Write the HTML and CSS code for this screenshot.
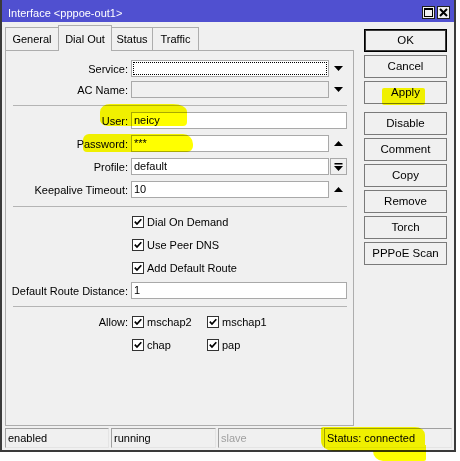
FILE: index.html
```html
<!DOCTYPE html>
<html>
<head>
<meta charset="utf-8">
<link rel="stylesheet" href="styles.css">
</head>
<body>
<div class="window">
  <div class="titlebar">
    <span class="title">Interface &lt;pppoe-out1&gt;</span>
    <div class="tbtns">
      <span class="tbtn"><svg width="9" height="9" viewBox="0 0 9 9"><rect x="0.5" y="0.5" width="8" height="8" fill="none" stroke="#000"/><rect x="0" y="0" width="9" height="2" fill="#000"/></svg></span>
      <span class="tbtn"><svg width="9" height="9" viewBox="0 0 9 9"><path d="M1 1L8 8M8 1L1 8" stroke="#000" stroke-width="2"/></svg></span>
    </div>
  </div>
  <div class="body">
    <div class="main">
      <div class="left">
        <div class="tabs">
          <div class="tab t-general">General</div>
          <div class="tab t-dial active">Dial Out</div>
          <div class="tab t-status">Status</div>
          <div class="tab t-traffic">Traffic</div>
        </div>
        <div class="panel">
          <div class="row first">
            <div class="lbl">Service:</div>
            <div class="field"><div class="input focus"></div><div class="arrow"><svg width="9" height="5" viewBox="0 0 9 5"><path d="M0 0H9L4.5 5Z"/></svg></div></div>
          </div>
          <div class="row tight">
            <div class="lbl">AC Name:</div>
            <div class="field"><div class="input disabled"></div><div class="arrow"><svg width="9" height="5" viewBox="0 0 9 5"><path d="M0 0H9L4.5 5Z"/></svg></div></div>
          </div>
          <div class="sep"></div>
          <div class="row">
            <div class="lbl">User:</div>
            <div class="field"><div class="input">neicy</div></div>
          </div>
          <div class="row">
            <div class="lbl">Password:</div>
            <div class="field"><div class="input">***</div><div class="arrow"><svg width="9" height="5" viewBox="0 0 9 5"><path d="M0 5H9L4.5 0Z"/></svg></div></div>
          </div>
          <div class="row">
            <div class="lbl">Profile:</div>
            <div class="field"><div class="input">default</div><div class="arrow boxed"><svg width="9" height="8" viewBox="0 0 9 8"><rect x="0.5" y="0" width="8" height="1.5"/><path d="M0 3H9L4.5 8Z"/></svg></div></div>
          </div>
          <div class="row">
            <div class="lbl">Keepalive Timeout:</div>
            <div class="field"><div class="input">10</div><div class="arrow"><svg width="9" height="5" viewBox="0 0 9 5"><path d="M0 5H9L4.5 0Z"/></svg></div></div>
          </div>
          <div class="sep sep2"></div>
          <div class="crow">
            <span class="cb"><svg width="10" height="10" viewBox="0 0 10 10"><path d="M1.8 4.6L4 7L8.3 2.2" fill="none" stroke="#000" stroke-width="1.7"/></svg></span>Dial On Demand
          </div>
          <div class="crow">
            <span class="cb"><svg width="10" height="10" viewBox="0 0 10 10"><path d="M1.8 4.6L4 7L8.3 2.2" fill="none" stroke="#000" stroke-width="1.7"/></svg></span>Use Peer DNS
          </div>
          <div class="crow">
            <span class="cb"><svg width="10" height="10" viewBox="0 0 10 10"><path d="M1.8 4.6L4 7L8.3 2.2" fill="none" stroke="#000" stroke-width="1.7"/></svg></span>Add Default Route
          </div>
          <div class="row">
            <div class="lbl">Default Route Distance:</div>
            <div class="field"><div class="input">1</div></div>
          </div>
          <div class="sep"></div>
          <div class="row allow">
            <div class="lbl">Allow:</div>
            <div class="citems">
              <span class="citem"><span class="cb"><svg width="10" height="10" viewBox="0 0 10 10"><path d="M1.8 4.6L4 7L8.3 2.2" fill="none" stroke="#000" stroke-width="1.7"/></svg></span>mschap2</span>
              <span class="citem"><span class="cb"><svg width="10" height="10" viewBox="0 0 10 10"><path d="M1.8 4.6L4 7L8.3 2.2" fill="none" stroke="#000" stroke-width="1.7"/></svg></span>mschap1</span>
            </div>
          </div>
          <div class="row allow">
            <div class="lbl"></div>
            <div class="citems">
              <span class="citem"><span class="cb"><svg width="10" height="10" viewBox="0 0 10 10"><path d="M1.8 4.6L4 7L8.3 2.2" fill="none" stroke="#000" stroke-width="1.7"/></svg></span>chap</span>
              <span class="citem"><span class="cb"><svg width="10" height="10" viewBox="0 0 10 10"><path d="M1.8 4.6L4 7L8.3 2.2" fill="none" stroke="#000" stroke-width="1.7"/></svg></span>pap</span>
            </div>
          </div>
        </div>
      </div>
      <div class="buttons">
        <div class="btn ok">OK</div>
        <div class="btn">Cancel</div>
        <div class="btn apply">Apply</div>
        <div class="btn">Disable</div>
        <div class="btn">Comment</div>
        <div class="btn">Copy</div>
        <div class="btn">Remove</div>
        <div class="btn">Torch</div>
        <div class="btn">PPPoE Scan</div>
      </div>
    </div>
    <div class="status">
      <div class="cell c1">enabled</div>
      <div class="cell c2">running</div>
      <div class="cell c3 dim">slave</div>
      <div class="cell c4">Status: connected</div>
    </div>
  </div>
</div>
<div class="hl hl-user"></div>
<div class="hl hl-pass"></div>
<div class="hl hl-apply"></div>
<div class="hl hl-status"></div>
<div class="hl hl-status2"></div>
</body>
</html>
```

FILE: styles.css
```css
body {
  margin: 0;
  background: #fff;
  font: 11px "Liberation Sans", Arial, sans-serif;
  color: #000;
  position: relative;
  width: 460px;
  height: 461px;
  overflow: hidden;
}

.window {
  width: 456px;
  height: 452px;
  box-sizing: border-box;
  border: 2px solid #3a3a3a;
  border-top: 0;
  background: #f0f0f0;
  display: flex;
  flex-direction: column;
}

.titlebar {
  height: 22px;
  flex: none;
  background: #5050d0;
  color: #fff;
  display: flex;
  justify-content: space-between;
  align-items: flex-start;
  padding: 0 4px 0 6px;
  box-sizing: border-box;
}

.title {
  font-size: 11px;
  line-height: 14px;
  margin-top: 6px;
}

.tbtns {
  display: flex;
  gap: 2px;
  margin-top: 6px;
}

.tbtn {
  width: 13px;
  height: 13px;
  box-sizing: border-box;
  background: #f0f0f0;
  border: 1px solid #202020;
  display: flex;
  align-items: center;
  justify-content: center;
}

.body {
  flex: 1;
  padding: 3px 2px 0 3px;
  display: flex;
  flex-direction: column;
}

.main {
  display: flex;
  height: 401px;
}

.left {
  width: 349px;
  display: flex;
  flex-direction: column;
}

.tabs {
  display: flex;
  align-items: flex-end;
  height: 25px;
  flex: none;
  position: relative;
  z-index: 1;
}

.tab {
  height: 23px;
  box-sizing: border-box;
  border: 1px solid #adadad;
  border-bottom: 0;
  background: #f0f0f0;
  display: flex;
  align-items: center;
  justify-content: center;
  margin-right: -1px;
}

.tab.active {
  height: 26px;
  margin-bottom: -1px;
  background: #f0f0f0;
  position: relative;
  z-index: 2;
}

.t-general { width: 54px; }
.t-dial { width: 54px; }
.t-status { width: 42px; }
.t-traffic { width: 47px; }

.panel {
  height: 376px;
  box-sizing: border-box;
  border: 1px solid #adadad;
  padding: 9px 6px 0 0;
}

.row {
  display: flex;
  align-items: center;
  height: 17px;
  margin-top: 6px;
}

.row.first { margin-top: 0; }
.row.tight { margin-top: 4px; }

.lbl {
  width: 122px;
  margin-right: 3px;
  text-align: right;
  white-space: nowrap;
}

.field {
  width: 216px;
  height: 17px;
  display: flex;
  gap: 1px;
}

.input {
  flex: 1;
  height: 17px;
  box-sizing: border-box;
  border: 1px solid #a9a9a9;
  background: #fff;
  padding-left: 2px;
  line-height: 15px;
}

.input.focus {
  outline: 1px dotted #000;
  outline-offset: -3px;
}

.input.disabled {
  background: #f0f0f0;
}

.arrow {
  width: 17px;
  height: 17px;
  display: flex;
  align-items: center;
  justify-content: center;
  box-sizing: border-box;
}

.arrow.boxed {
  border: 1px solid #a9a9a9;
  background: #f0f0f0;
}

.sep {
  height: 1px;
  background: #b4b4b4;
  margin: 7px 0 0 7px;
}

.sep2 { margin-top: 8px; }

.crow {
  display: flex;
  align-items: center;
  height: 17px;
  margin-top: 6px;
  padding-left: 126px;
}

.cb {
  width: 12px;
  height: 12px;
  box-sizing: border-box;
  border: 1px solid #333;
  background: #fff;
  margin-right: 3px;
  display: inline-flex;
  align-items: center;
  justify-content: center;
  flex: none;
}

.row.allow .lbl { margin-right: 4px; }

.citems {
  display: flex;
}

.citem {
  width: 75px;
  display: flex;
  align-items: center;
}

.buttons {
  margin-left: 10px;
  width: 83px;
  padding-top: 4px;
  display: flex;
  flex-direction: column;
  gap: 3px;
}

.btn {
  height: 23px;
  box-sizing: border-box;
  border: 1px solid #7a7a7a;
  background: #f0f0f0;
  text-align: center;
  line-height: 21px;
  font-size: 11.5px;
}

.btn.ok {
  border-color: #000;
  box-shadow: inset 0 0 0 1px #3a3a3a;
}

.btn.apply { margin-bottom: 5px; }

.status {
  display: flex;
  height: 20px;
  margin-top: 2px;
}

.cell {
  box-sizing: border-box;
  border: 1px solid;
  border-color: #a0a0a0 #e4e4e4 #e4e4e4 #a0a0a0;
  padding-left: 2px;
  line-height: 18px;
  white-space: nowrap;
}

.c1 { width: 104px; margin-right: 2px; }
.c2 { width: 105px; margin-right: 2px; }
.c3 { width: 105px; margin-right: 1px; }
.c4 { width: 128px; }
.dim { color: #a0a0a0; }

.hl {
  position: absolute;
  background: #ffff00;
  mix-blend-mode: multiply;
}

.hl-user {
  left: 100px;
  top: 104px;
  width: 87px;
  height: 22px;
  border-radius: 10px 14px 4px 8px / 8px 8px 4px 6px;
}

.hl-pass {
  left: 83px;
  top: 134px;
  width: 110px;
  height: 18px;
  border-radius: 6px 10px 6px 4px;
}

.hl-apply {
  left: 382px;
  top: 88px;
  width: 43px;
  height: 17px;
  border-radius: 2px;
}

.hl-status {
  left: 321px;
  top: 427px;
  width: 104px;
  height: 24px;
  border-radius: 2px 10px 0 12px / 2px 8px 0 10px;
}

.hl-status2 {
  left: 373px;
  top: 445px;
  width: 53px;
  height: 16px;
  border-radius: 0 0 2px 10px;
}
```
